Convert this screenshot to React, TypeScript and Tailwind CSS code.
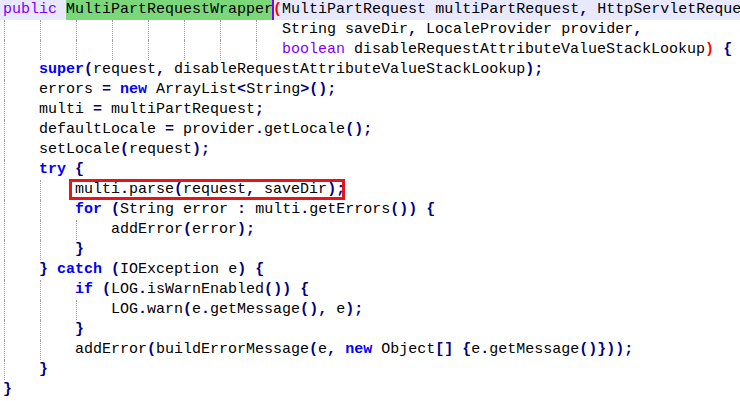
import React from "react";

const KW_TYPE = new Set(["public", "boolean"]);
const KW_INSTR = new Set(["super", "new", "try", "for", "catch", "if"]);

function Code({ s }: { s: string }) {
  const parts: React.ReactNode[] = [];
  const re = /(\s+)|([A-Za-z_][A-Za-z0-9_]*)|(.)/g;
  let m: RegExpExecArray | null;
  let i = 0;
  while ((m = re.exec(s)) !== null) {
    const t = m[0];
    if (m[1]) parts.push(<span key={i++}>{t}</span>);
    else if (m[2]) {
      if (KW_TYPE.has(t))
        parts.push(
          <span key={i++} className="text-[#8000ff]">
            {t}
          </span>
        );
      else if (KW_INSTR.has(t))
        parts.push(
          <span key={i++} className="text-[#0000ff] font-bold">
            {t}
          </span>
        );
      else
        parts.push(
          <span key={i++} className="text-black">
            {t}
          </span>
        );
    } else
      parts.push(
        <span key={i++} className="text-[#000080] font-bold">
          {t}
        </span>
      );
  }
  return <>{parts}</>;
}

function Guide({ short }: { short?: boolean }) {
  return (
    <span
      className={
        short
          ? "inline-block h-[20px] w-[27px] align-top"
          : "inline-block h-[20px] w-[36px] align-top"
      }
    >
      <span className="block h-full ml-[1px] border-l border-dotted border-[#a0a0a0]" />
    </span>
  );
}

function Guides({ n }: { n: number }) {
  return (
    <>
      {Array.from({ length: n }).map((_, k) => (
        <Guide key={k} />
      ))}
    </>
  );
}

function Line({
  guides = 0,
  children,
  className = "",
}: {
  guides?: number;
  children?: React.ReactNode;
  className?: string;
}) {
  return (
    <div className={"h-[20px] leading-[20px] whitespace-pre pl-[3px] " + className}>
      <Guides n={guides} />
      {children}
    </div>
  );
}

function RedParen({ c }: { c: string }) {
  return <span className="text-[#ff0000] font-bold">{c}</span>;
}

export default function App() {
  return (
    <div
      className="w-[740px] h-[401px] overflow-hidden bg-white text-[15px] text-black"
      style={{ fontFamily: '"Liberation Mono", "Courier New", monospace' }}
    >
      <Line className="bg-[#e8e8ff]">
        <Code s="public " />
        <span className="inline-block h-[20px] align-top bg-[#7ad87a]">
          <Code s="MultiPartRequestWrapper" />
        </span>
        <span className="relative inline-block w-0 h-[20px] align-top">
          <span className="absolute left-[-1px] top-0 w-[2px] h-[20px] bg-[#8000ff]" />
        </span>
        <RedParen c="(" />
        <Code s="MultiPartRequest multiPartRequest, HttpServletRequest request," />
      </Line>
      <Line>
        <Guides n={7} />
        <Guide short />
        <Code s="String saveDir, LocaleProvider provider," />
      </Line>
      <Line>
        <Guides n={7} />
        <Guide short />
        <Code s="boolean disableRequestAttributeValueStackLookup" />
        <RedParen c=")" />
        <Code s=" {" />
      </Line>
      <Line guides={1}>
        <Code s="super(request, disableRequestAttributeValueStackLookup);" />
      </Line>
      <Line guides={1}>
        <Code s="errors = new ArrayList<String>();" />
      </Line>
      <Line guides={1}>
        <Code s="multi = multiPartRequest;" />
      </Line>
      <Line guides={1}>
        <Code s="defaultLocale = provider.getLocale();" />
      </Line>
      <Line guides={1}>
        <Code s="setLocale(request);" />
      </Line>
      <Line guides={1}>
        <Code s="try {" />
      </Line>
      <Line guides={2}>
        <span className="relative inline-block h-[20px] align-top">
          <Code s="multi.parse(request, saveDir);" />
          <span className="absolute left-[-6px] right-0 top-[-1px] bottom-0 border-[3px] border-[#e8141c]" />
        </span>
      </Line>
      <Line guides={2}>
        <Code s="for (String error : multi.getErrors()) {" />
      </Line>
      <Line guides={3}>
        <Code s="addError(error);" />
      </Line>
      <Line guides={2}>
        <Code s="}" />
      </Line>
      <Line guides={1}>
        <Code s="} catch (IOException e) {" />
      </Line>
      <Line guides={2}>
        <Code s="if (LOG.isWarnEnabled()) {" />
      </Line>
      <Line guides={3}>
        <Code s="LOG.warn(e.getMessage(), e);" />
      </Line>
      <Line guides={2}>
        <Code s="}" />
      </Line>
      <Line guides={2}>
        <Code s="addError(buildErrorMessage(e, new Object[] {e.getMessage()}));" />
      </Line>
      <Line guides={1}>
        <Code s="}" />
      </Line>
      <Line>
        <Code s="}" />
      </Line>
    </div>
  );
}
